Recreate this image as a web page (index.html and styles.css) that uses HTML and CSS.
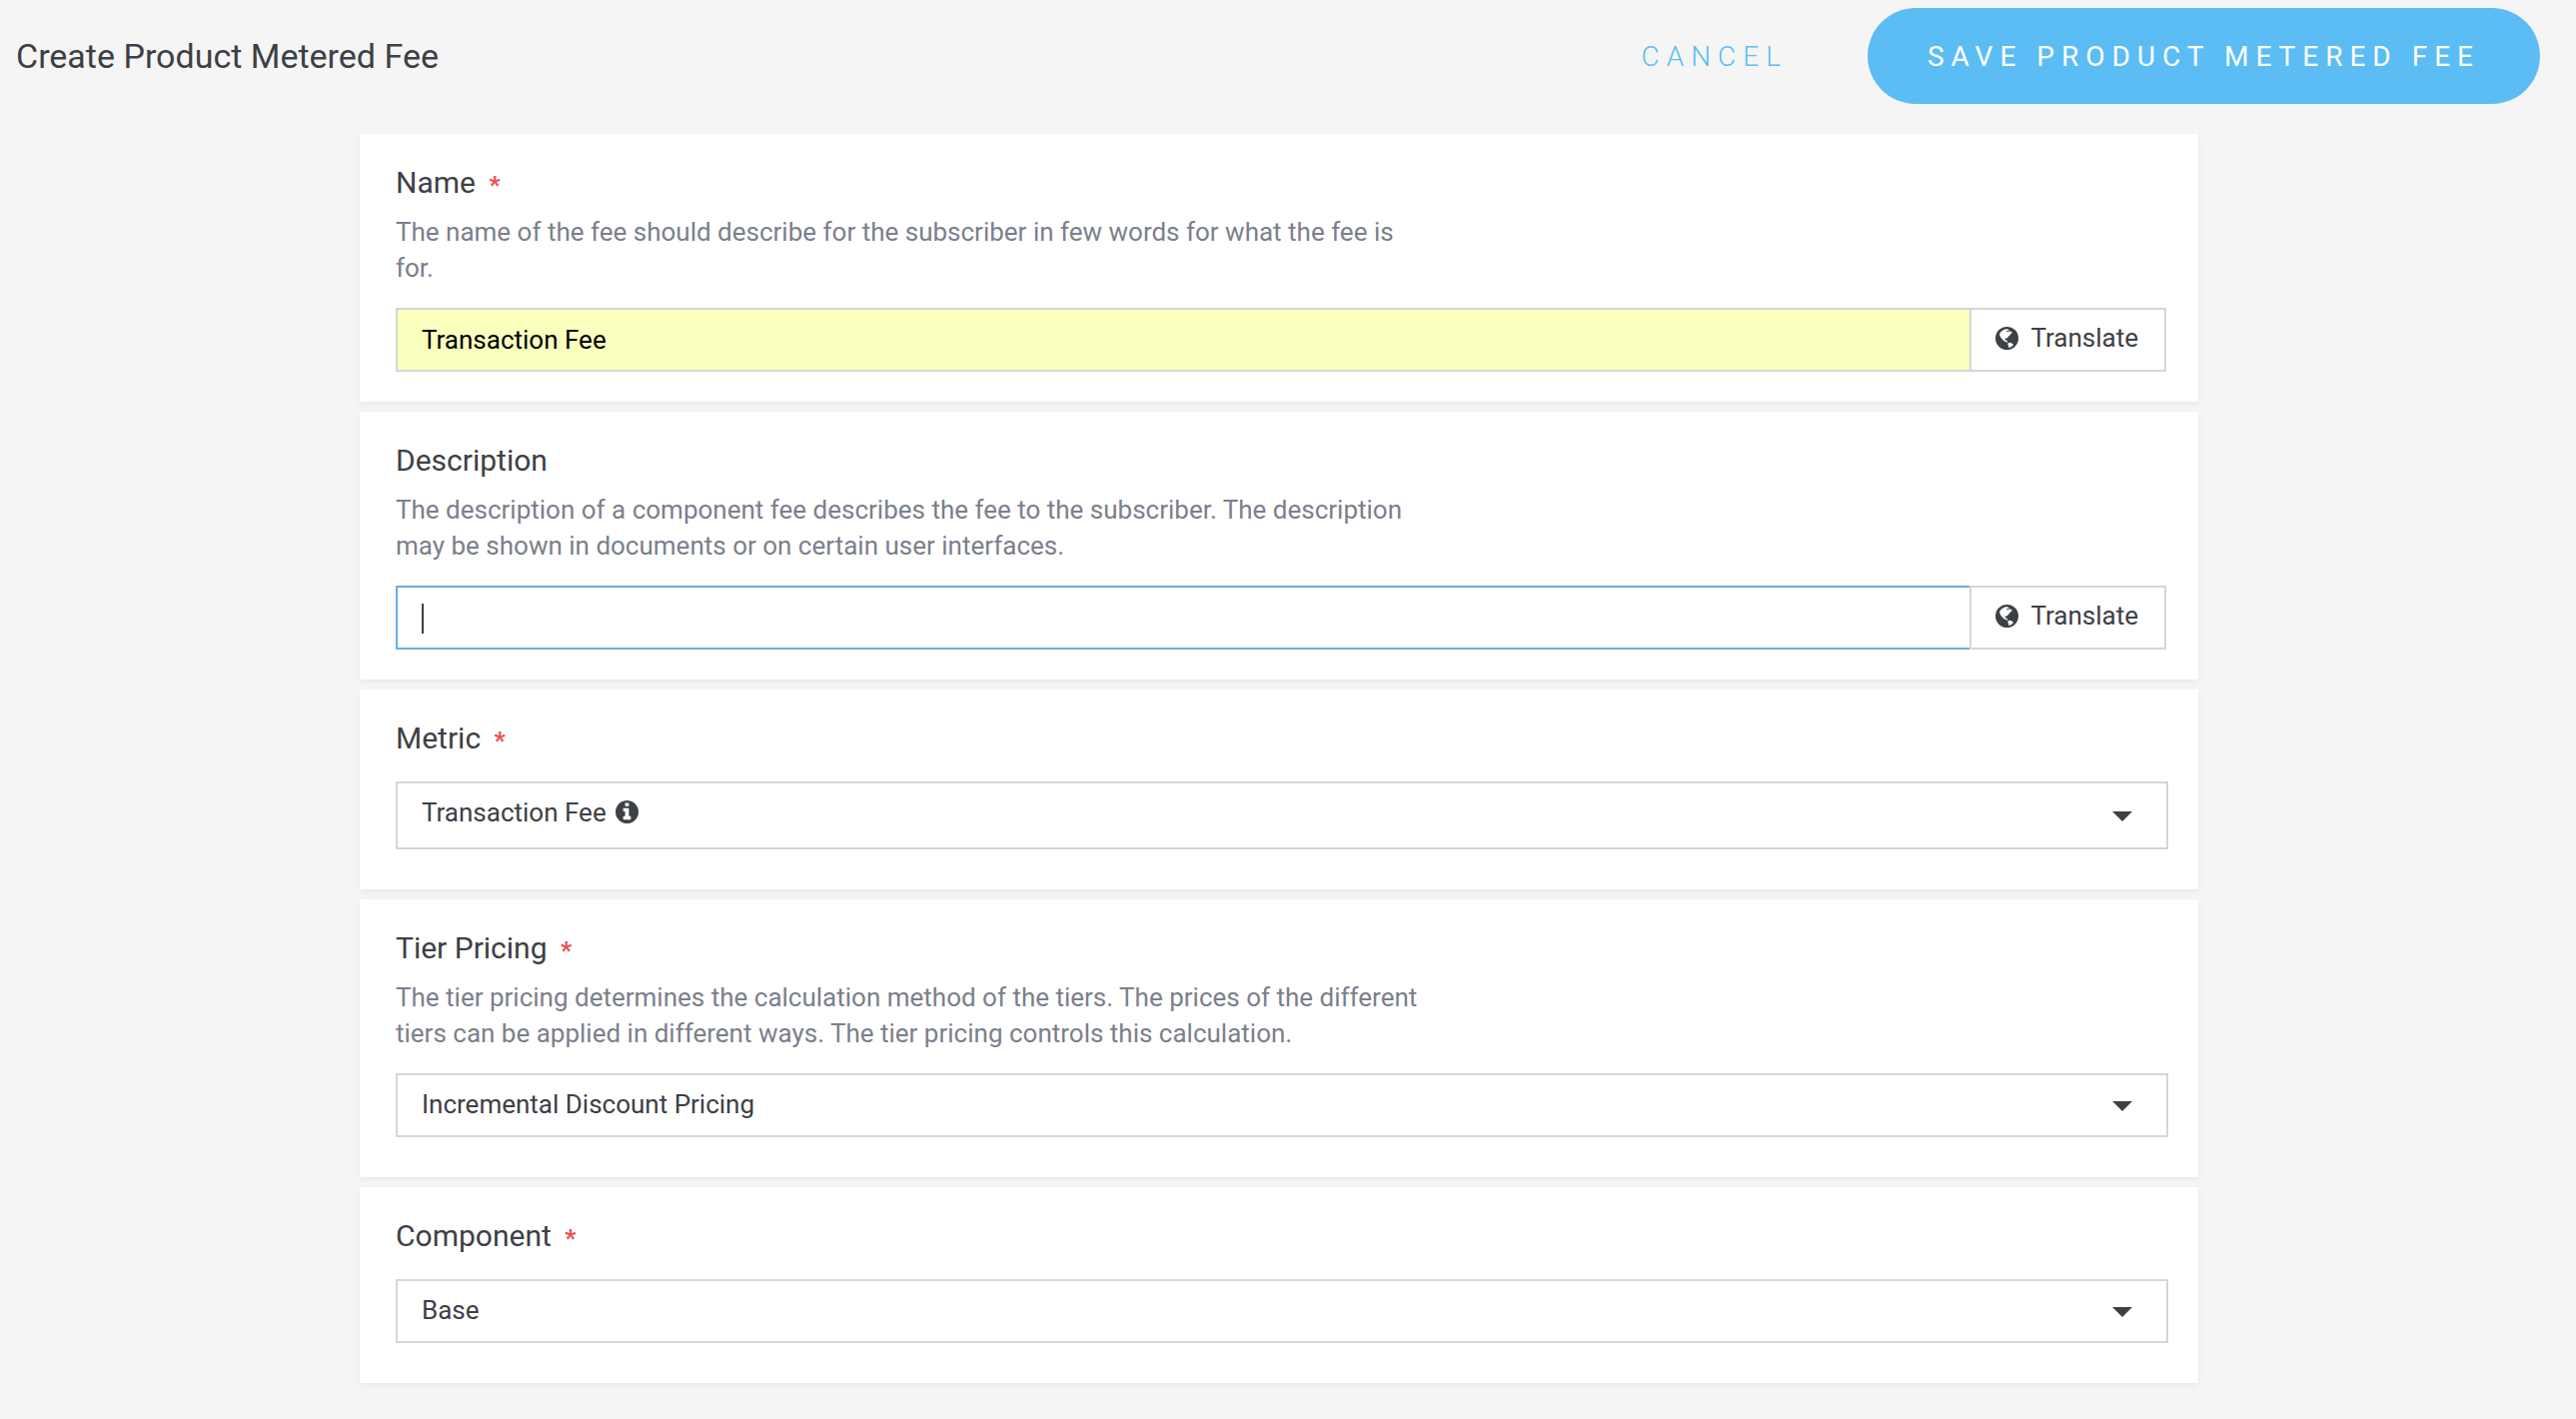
FILE: index.html
```html
<!DOCTYPE html>
<html lang="en">
<head>
  <meta charset="UTF-8">
  <meta name="viewport" content="width=device-width, initial-scale=1.0">
  <title>Create Product Metered Fee</title>
  <link rel="stylesheet" href="styles.css">
</head>

<body>
  <svg class="sprite" aria-hidden="true">
    <symbol id="globe" viewBox="0 0 24 24">
      <circle cx="12" cy="12" r="12" fill="#3d4045"/>
      <path fill="#fff" d="M4.2 7.2 6 5 8.6 3.2 11 2.3 12.6 2.6 14.3 3.2 13.6 4.4 11.8 4.1 11.6 5.2 13.2 5.6 14.6 4.6 16.6 4.9 17.4 6.6 16 7.4 14.8 9.2 13.2 10.4 12.4 12 11.2 11.8 10 12.6 10.2 14 11.6 13.8 12 15.2 13 16 12.4 16.8 10.8 15.6 8.8 14.8 7 13 5.4 11 4.6 9.2z"/>
      <path fill="#fff" d="M13.4 17 15 16.4 17 17.2 18.8 18.4 17.6 20.2 15.6 21.4 13.6 22 13.8 20 12.8 18.4z"/>
    </symbol>
    <symbol id="info" viewBox="128 128 1536 1536">
      <path fill="#3d4045" d="M1152 1376v-160q0-14-9-23t-23-9h-96v-512q0-14-9-23t-23-9h-320q-14 0-23 9t-9 23v160q0 14 9 23t23 9h96v320h-96q-14 0-23 9t-9 23v160q0 14 9 23t23 9h448q14 0 23-9t9-23zm-128-896v-160q0-14-9-23t-23-9h-192q-14 0-23 9t-9 23v160q0 14 9 23t23 9h192q14 0 23-9t9-23zm640 416q0 209-103 385.5t-279.5 279.5-385.5 103-385.5-103-279.5-279.5-103-385.5 103-385.5 279.5-279.5 385.5-103 385.5 103 279.5 279.5 103 385.5z"/>
    </symbol>
  </svg>

  <form>
    <header class="toolbar">
      <h1 class="title">Create Product Metered Fee</h1>
      <a href="#" class="cancel">CANCEL</a>
      <button type="submit" class="save">SAVE PRODUCT METERED FEE</button>
    </header>

    <main class="cards">
      <section class="card card-text">
        <label class="label" for="name">Name <span class="required">*</span></label>
        <p class="help">The name of the fee should describe for the subscriber in few words for what the fee is for.</p>
        <div class="field group">
          <input class="input filled" type="text" id="name" value="Transaction Fee">
          <button type="button" class="translate"><svg class="icon"><use href="#globe"/></svg>Translate</button>
        </div>
      </section>

      <section class="card card-text">
        <label class="label" for="description">Description</label>
        <p class="help">The description of a component fee describes the fee to the subscriber. The description may be shown in documents or on certain user interfaces.</p>
        <div class="field group">
          <input class="input focused" type="text" id="description">
          <span class="cursor"></span>
          <button type="button" class="translate"><svg class="icon"><use href="#globe"/></svg>Translate</button>
        </div>
      </section>

      <section class="card">
        <label class="label" for="metric">Metric <span class="required">*</span></label>
        <div class="field dropdown">
          <select class="select tall" id="metric">
            <option>Transaction Fee</option>
          </select>
          <svg class="icon info"><use href="#info"/></svg>
        </div>
      </section>

      <section class="card">
        <label class="label" for="pricing">Tier Pricing <span class="required">*</span></label>
        <p class="help">The tier pricing determines the calculation method of the tiers. The prices of the different tiers can be applied in different ways. The tier pricing controls this calculation.</p>
        <div class="field dropdown">
          <select class="select" id="pricing">
            <option>Incremental Discount Pricing</option>
          </select>
        </div>
      </section>

      <section class="card">
        <label class="label" for="component">Component <span class="required">*</span></label>
        <div class="field dropdown">
          <select class="select" id="component">
            <option>Base</option>
          </select>
        </div>
      </section>
    </main>
  </form>
</body>
</html>
```
FILE: styles.css
```css
*, *::before, *::after {
  box-sizing: border-box;
}

body {
  margin: 0;
  background-color: #f5f5f5;
  color: #3d4045;
  font-family: Roboto, sans-serif;
  font-size: 26px;
}

input, select, button {
  font: inherit;
  color: inherit;
}

.sprite {
  display: none;
}

/* top bar */
.toolbar {
  display: flex;
  align-items: center;
  padding: 8px 36px 0 16px;
}

.title {
  margin: 0 auto 0 0;
  font-size: 34px;
  font-weight: 400;
}

.cancel {
  margin-right: 80px;
  color: #5bbdf3;
  font-size: 28px;
  font-weight: 300;
  letter-spacing: 7px;
  text-decoration: none;
}

.save {
  height: 96px;
  padding: 0 60px;
  border: 0;
  border-radius: 48px;
  background-color: #5bbdf3;
  color: #fff;
  font-size: 28px;
  letter-spacing: 7px;
}

/* form cards */
.cards {
  display: flex;
  flex-direction: column;
  gap: 10px;
  max-width: 1858px;
  margin: 0 auto;
  padding: 30px 18px 36px 0;
}

.card {
  padding: 28px 30px 40px 36px;
  background-color: #fff;
  box-shadow: 0 2px 6px rgba(0, 0, 0, 0.06);
}

.card-text {
  padding-right: 32px;
  padding-bottom: 30px;
}

.label {
  display: block;
  font-size: 30px;
  line-height: 42px;
}

.required {
  margin-left: 6px;
  color: #f0504f;
  font-size: 24px;
  font-weight: 900;
  line-height: 1;
}

.help {
  width: calc(100% * 7 / 12);
  margin: 10px 0 0;
  color: #7b7f8c;
  line-height: 36px;
}

.field {
  position: relative;
  margin-top: 22px;
}

.group {
  display: flex;
}

.input {
  flex: 1;
  height: 64px;
  padding: 0 24px;
  border: 2px solid #d6d6d6;
  border-right: 0;
  background-color: #fff;
  outline: none;
}

.filled {
  background-color: #faffbd;
  color: #000;
}

.focused {
  border-color: #66afe9;
}

.cursor {
  position: absolute;
  top: 18px;
  left: 26px;
  width: 2px;
  height: 30px;
  background-color: #3d4045;
}

.translate {
  display: flex;
  align-items: center;
  gap: 12px;
  padding: 0 26px 4px 24px;
  border: 2px solid #d6d6d6;
  background-color: #fff;
}

.icon {
  width: 23px;
  height: 23px;
}

.select {
  display: block;
  width: 100%;
  height: 64px;
  padding: 0 60px 2px 24px;
  border: 2px solid #d6d6d6;
  border-radius: 0;
  background-color: #fff;
  appearance: none;
}

.tall {
  height: 68px;
  padding-bottom: 6px;
}

.info {
  position: absolute;
  top: 19px;
  left: 220px;
}

/* dropdown arrow */
.dropdown::after {
  content: "";
  position: absolute;
  top: calc(50% - 4px);
  right: 36px;
  border: 10px solid transparent;
  border-top-color: #3d4045;
  border-bottom: 0;
}
```
